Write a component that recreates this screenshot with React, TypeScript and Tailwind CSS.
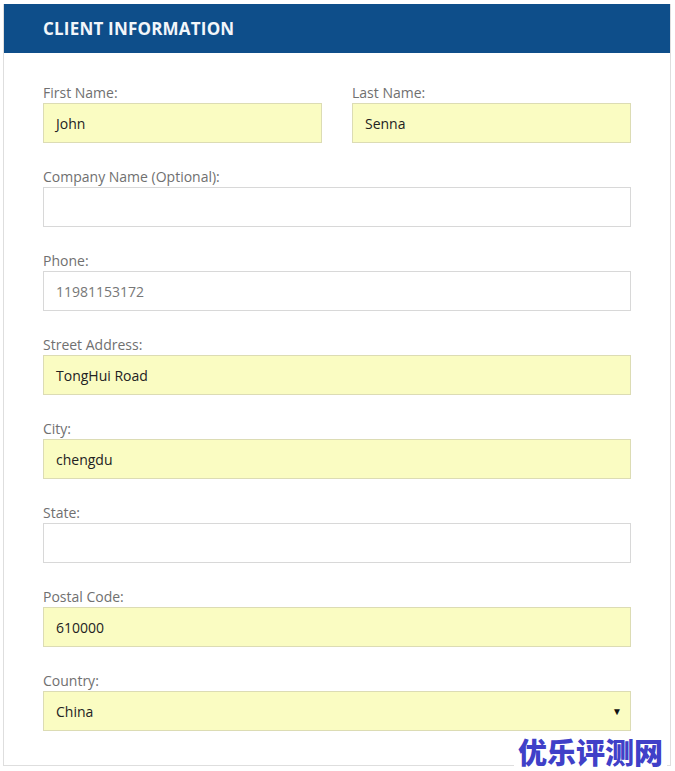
const fields: { label: string; value: string; filled?: boolean; muted?: boolean; select?: boolean }[] = [
  { label: 'Company Name (Optional):', value: '' },
  { label: 'Phone:', value: '11981153172', muted: true },
  { label: 'Street Address:', value: 'TongHui Road', filled: true },
  { label: 'City:', value: 'chengdu', filled: true },
  { label: 'State:', value: '' },
  { label: 'Postal Code:', value: '610000', filled: true },
  { label: 'Country:', value: 'China', filled: true, select: true },
]

function Field({ label, value, filled, muted, select }: { label: string; value: string; filled?: boolean; muted?: boolean; select?: boolean }) {
  return (
    <div className="flex flex-col">
      <label className="h-5 text-[14px] leading-5 text-[#707070]">{label}</label>
      <div
        className={`flex h-10 items-center justify-between border px-3 text-[14px] ${
          filled ? 'border-[#dcdcb4] bg-[#fafcc2]' : 'border-[#d8d8d8] bg-white'
        } ${muted ? 'text-[#777]' : 'text-[#222]'}`}
      >
        <span>{value}</span>
        {select && <span className="mr-[-4px] text-[10px] text-[#111]">▼</span>}
      </div>
    </div>
  )
}

export default function App() {
  return (
    <div className="relative h-[771px] w-[675px] bg-white pl-[3px] pr-1 pt-1 font-['Open_Sans',sans-serif]">
      <div className="h-[762px] border border-t-0 border-[#dedede] bg-white">
        <div className="flex h-[49px] items-center bg-[#0e4e8a] px-[39px]">
          <h2 className="text-[17px] font-bold tracking-[0.2px] text-[#f2f6fa]">CLIENT INFORMATION</h2>
        </div>
        <div className="flex flex-col gap-6 pl-[39px] pr-[39px] pt-[30px]">
          <div className="grid grid-cols-2 gap-[30px]">
            <Field label="First Name:" value="John" filled />
            <Field label="Last Name:" value="Senna" filled />
          </div>
          {fields.map((f) => (
            <Field key={f.label} {...f} />
          ))}
        </div>
      </div>
      <div className="absolute bottom-0 right-[8px] bg-white pl-1 pr-1 text-[29px] font-black leading-[40px] text-[#4040c8] font-['Noto_Sans_CJK_SC',sans-serif]">
        优乐评测网
      </div>
    </div>
  )
}
